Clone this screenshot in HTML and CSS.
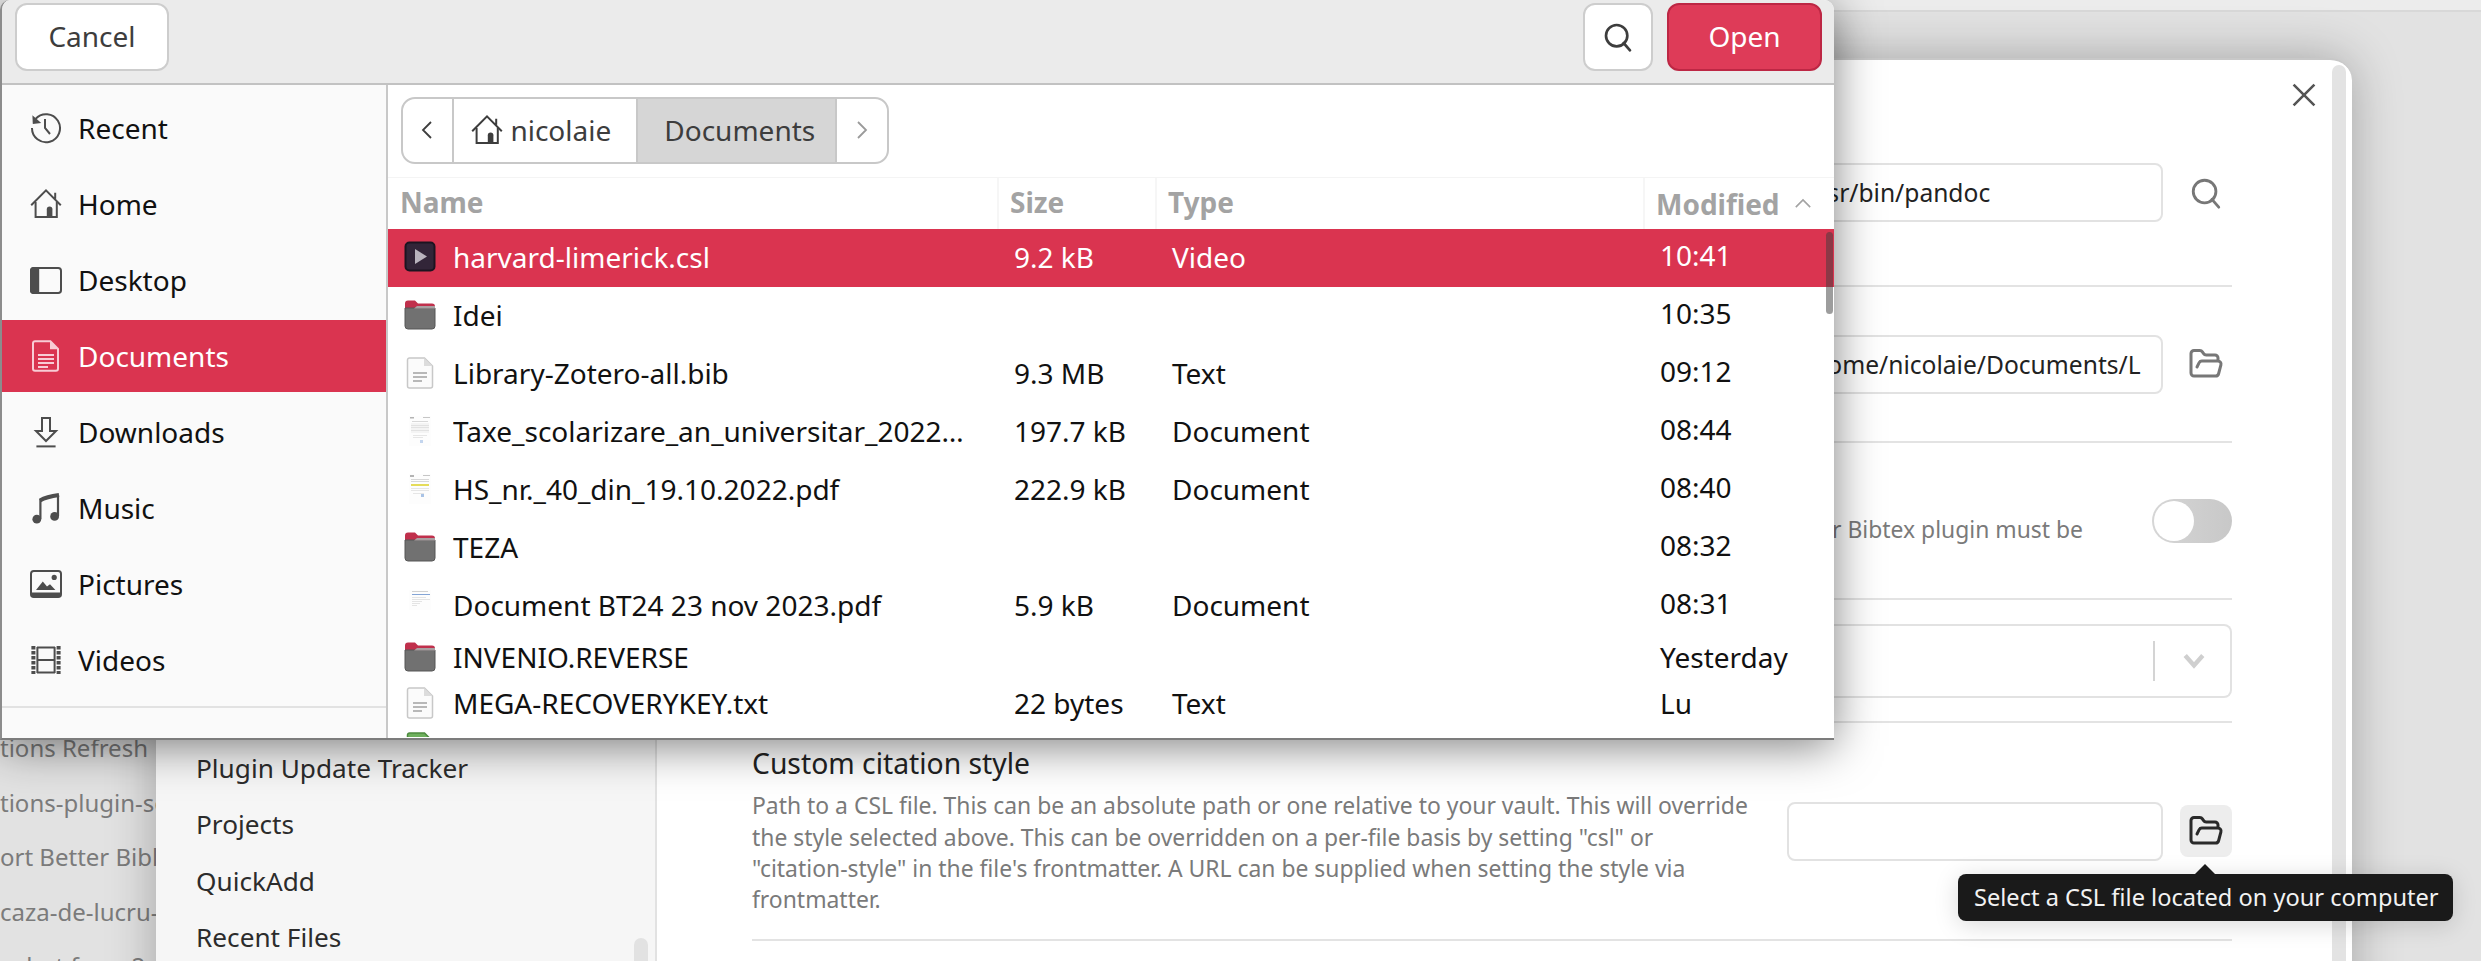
FILE: index.html
```html
<!DOCTYPE html>
<html lang="en">
  <head>
    <meta charset="UTF-8" />
    <title>Open CSL file</title>
    <link rel="stylesheet" href="styles.css">
  </head>
  <body>
    <svg class="sprite" xmlns="http://www.w3.org/2000/svg">
      <symbol id="i-recent" viewBox="0 0 16 16">
        <path d="M2.8 3.4A7 7 0 1 1 1 8" fill="none" stroke="currentColor" />
        <path d="M1.2 1.6 1.4 6l4.2-.5z" fill="currentColor" />
        <path d="M7.5 3.5V8l2.5 3" fill="none" stroke="currentColor" />
      </symbol>
      <symbol id="i-home" viewBox="0 0 16 16">
        <path d="M.6 8.6 8 1.2l7.4 7.4M12.6 2.4v3" fill="none" stroke="currentColor" />
        <path d="M2.8 7v7.5h10.6V7" fill="none" stroke="currentColor" />
        <path d="M8.4 10.6a1.3 1.3 0 0 1 2.8 0V15H8.4z" fill="currentColor" />
      </symbol>
      <symbol id="i-desktop" viewBox="0 0 16 16">
        <rect x=".5" y="2" width="15" height="12.5" rx="1.4" fill="none" stroke="currentColor" />
        <path d="M2 1.5h2.6v13.5H2a2 2 0 0 1-2-2V3.500a2 2 0 0 1 2-2z" fill="currentColor" />
      </symbol>
      <symbol id="i-doc" viewBox="0 0 16 16">
        <path d="M2.500.6h7.700l3.800 3.800v10a1 1 0 0 1-1 1H2.500a1 1 0 0 1-1-1V1.600a1 1 0 0 1 1-1z" fill="none" stroke="currentColor" />
        <path d="M10 .6v4h4z" fill="currentColor" />
        <path d="M4 7.500h8M4 9.500h8M4 11.500h8M4 13.500h5" fill="none" stroke="currentColor" stroke-width=".9" />
      </symbol>
      <symbol id="i-down" viewBox="0 0 16 16">
        <path d="M6 1h4v6.500h3L8 12.500 3 7.500h3z" fill="none" stroke="currentColor" />
        <path d="M3.200 15.200h9.600" fill="none" stroke="currentColor" />
      </symbol>
      <symbol id="i-music" viewBox="0 0 16 16">
        <path d="M5.200 13.500V3.500M14 12V1.500" fill="none" stroke="currentColor" stroke-width="1.100" />
        <path d="M5 4.200C8 2.500 11 2 14.500 1.500" fill="none" stroke="currentColor" stroke-width="2" />
        <circle cx="3.400" cy="13.600" r="2.200" fill="currentColor" />
        <circle cx="12.300" cy="12.200" r="2.200" fill="currentColor" />
      </symbol>
      <symbol id="i-pics" viewBox="0 0 16 16">
        <rect x=".5" y="1.500" width="15" height="13" rx="1.400" fill="none" stroke="currentColor" />
        <path d="M.5 12.300h15V13a1.500 1.500 0 0 1-1.500 1.500H2A1.500 1.500 0 0 1 .5 13z" fill="currentColor" />
        <path d="M3 11 6.400 6.800l2.100 2.400 1.500-1.100 2.700 2.900z" fill="currentColor" />
        <circle cx="12.100" cy="4.700" r="1.300" fill="currentColor" />
      </symbol>
      <symbol id="i-film" viewBox="0 0 16 16">
        <path d="M3.500 1.700h9M3.500 8h9M3.500 14.300h9M3.700 1.500v13M12.300 1.500v13" fill="none" stroke="currentColor" />
        <path d="M1.700 1v14M14.300 1v14" fill="none" stroke="currentColor" stroke-width="2" stroke-dasharray="1.800 .7" />
      </symbol>
      <symbol id="i-video" viewBox="0 0 32 32">
        <rect x="1.500" y="1.500" width="29" height="28" rx="4" fill="#322538" stroke="#1c1420" stroke-width="2" />
        <path d="M11 8 23 15.500 11 23z" fill="#b9b3bd" />
      </symbol>
      <symbol id="i-folder" viewBox="0 0 32 32">
        <path d="M1 8V4.500A3 3 0 0 1 4 1.500h7l3 3h14a3 3 0 0 1 3 3V13H1z" fill="#c0304c" />
        <path d="M1 9h30v18a3 3 0 0 1-3 3H4a3 3 0 0 1-3-3z" fill="#717171" stroke="#575757" />
        <path d="M10 9.500l3-2.500h18v2.500z" fill="#a9a0a2" />
      </symbol>
      <symbol id="i-text" viewBox="0 0 32 32">
        <path d="M5.500 1h15l8 8v20a2 2 0 0 1-2 2h-21a2 2 0 0 1-2-2V3a2 2 0 0 1 2-2z" fill="#fbfbfb" stroke="#c8c8c8" stroke-width="1.500" />
        <path d="M20 1v8h8.500z" fill="#dcdcdc" />
        <path d="M9 15h14v2H9zM9 19h14v2H9zM9 23h9v2H9z" fill="#b8b8b8" />
      </symbol>
      <symbol id="i-thumb-a" viewBox="0 0 32 32">
        <rect x="5" y="1" width="22" height="30" fill="#fdfdfd" />
        <path d="M6 2h4v1.500H6zM19 2h7v.8H19zM8 6h16v.6H8z" fill="#b4b4b4" />
        <path d="M7 8h18v10H7z" fill="#f4f4f4" />
        <path d="M7 10h18v.5H7zM7 12.500h18v.5H7zM7 15h18v.5H7zM9 20h14v.5H9zM9 22h10v.5H9z" fill="#d0d0d0" />
        <path d="M16 25h3v3h-3z" fill="#c3d5ee" />
      </symbol>
      <symbol id="i-thumb-b" viewBox="0 0 32 32">
        <rect x="5" y="1" width="22" height="30" fill="#fdfdfd" />
        <path d="M6 2h4v2H6zM19 2h7v.8H19zM7 6h18v.6H7zM7 8h18v.6H7z" fill="#b4b4b4" />
        <path d="M7 11h18v2H7z" fill="#e5dc5a" />
        <path d="M7 15h18v.5H7zM7 17h18v.5H7zM9 20h11v.5H9z" fill="#d0d0d0" />
        <path d="M17 21h3v3h-3z" fill="#a9c3e6" />
      </symbol>
      <symbol id="i-thumb-c" viewBox="0 0 32 32">
        <rect x="5" y="1" width="22" height="20" fill="#fdfdfd" />
        <path d="M8 2h16v.6H8z" fill="#b4b4b4" />
        <path d="M8 5h18v1H8z" fill="#84a5d6" />
        <path d="M8 8h14v.5H8zM8 10h18v.5H8zM8 12h10v.5H8zM8 14h8v.5H8zM8 16h5v.5H8z" fill="#cccccc" />
      </symbol>
      <symbol id="i-sheet" viewBox="0 0 32 32">
        <path d="M5.500 1h15l8 8v20a2 2 0 0 1-2 2h-21a2 2 0 0 1-2-2V3a2 2 0 0 1 2-2z" fill="#6fb05e" stroke="#4d8a3f" stroke-width="1.500" />
      </symbol>
      <symbol id="i-search" viewBox="0 0 24 24">
        <circle cx="11" cy="11" r="8" fill="none" stroke="currentColor" stroke-width="2" />
        <path d="m21 22-4.800-5.500" fill="none" stroke="currentColor" stroke-width="2" stroke-linecap="round" />
      </symbol>
      <symbol id="i-open" viewBox="0 0 24 24">
        <path d="m6 14 1.450-2.900A2 2 0 0 1 9.240 10H20a2 2 0 0 1 1.940 2.500l-1.550 6a2 2 0 0 1-1.940 1.500H4a2 2 0 0 1-2-2V5c0-1.100.9-2 2-2h3.930a2 2 0 0 1 1.660.9l.82 1.200a2 2 0 0 0 1.660.9H18a2 2 0 0 1 2 2v2" fill="none" stroke="currentColor" stroke-width="2" stroke-linecap="round" stroke-linejoin="round" />
      </symbol>
    </svg>

    <div class="desktop">
      <div class="app-top"></div>

      <div class="back-files">
        <div>tions Refresh</div>
        <div>tions-plugin-se</div>
        <div>ort Better Bibl</div>
        <div>caza-de-lucru-</div>
        <div>pshot from 2</div>
      </div>

      <div class="modal">
        <div class="modal-side">
          <div>Plugin Update Tracker</div>
          <div>Projects</div>
          <div>QuickAdd</div>
          <div>Recent Files</div>
          <div class="side-thumb"></div>
        </div>
        <div class="modal-main">
          <svg class="modal-close" viewBox="0 0 20 20"><path d="M2 2l16 16M18 2 2 18" /></svg>
          <div class="setting setting-first">
            <div class="info"></div>
            <div class="controls">
              <div class="field">/usr/bin/pandoc</div>
              <div class="icon-btn"><svg class="btn-search"><use href="#i-search" /></svg></div>
            </div>
          </div>
          <div class="setting setting-path">
            <div class="info"></div>
            <div class="controls">
              <div class="field">/home/nicolaie/Documents/L</div>
              <div class="icon-btn"><svg class="btn-open"><use href="#i-open" /></svg></div>
            </div>
          </div>
          <div class="setting setting-toggle">
            <div class="info toggle-info">Better Bibtex plugin must be</div>
            <div class="toggle"><div class="knob"></div></div>
          </div>
          <div class="setting setting-select">
            <div class="info"></div>
            <div class="select">
              <div class="select-sep"></div>
              <svg class="select-arrow" viewBox="0 0 20 14"><path d="M2 2l8 9 8-9" /></svg>
            </div>
          </div>
          <div class="setting setting-custom">
            <div class="info">
              <div class="info-title">Custom citation style</div>
              <div class="info-desc">
                Path to a CSL file. This can be an absolute path or one relative to your vault. This will override<br />
                the style selected above. This can be overridden on a per-file basis by setting "csl" or<br />
                "citation-style" in the file's frontmatter. A URL can be supplied when setting the style via<br />
                frontmatter.
              </div>
            </div>
            <div class="controls">
              <div class="field"></div>
              <div class="icon-btn icon-btn-active"><svg class="btn-open"><use href="#i-open" /></svg></div>
            </div>
          </div>
        </div>
        <div class="modal-scroll"><div></div></div>
      </div>

      <div class="tooltip">Select a CSL file located on your computer</div>

      <div class="dialog">
        <div class="dialog-head">
          <button class="btn btn-cancel">Cancel</button>
          <div class="head-right">
            <button class="btn btn-search-head"><svg><use href="#i-search" /></svg></button>
            <button class="btn btn-open-file">Open</button>
          </div>
        </div>
        <div class="dialog-body">
          <div class="places">
            <div class="place-list">
              <div class="place"><svg><use href="#i-recent" /></svg>Recent</div>
              <div class="place"><svg><use href="#i-home" /></svg>Home</div>
              <div class="place"><svg><use href="#i-desktop" /></svg>Desktop</div>
              <div class="place place-on"><svg><use href="#i-doc" /></svg>Documents</div>
              <div class="place"><svg><use href="#i-down" /></svg>Downloads</div>
              <div class="place"><svg><use href="#i-music" /></svg>Music</div>
              <div class="place"><svg><use href="#i-pics" /></svg>Pictures</div>
              <div class="place"><svg><use href="#i-film" /></svg>Videos</div>
            </div>
          </div>
          <div class="browser">
            <div class="path-wrap">
              <div class="pathbar">
                <div class="crumb crumb-nav">
                  <svg viewBox="0 0 12 20"><path d="M10 2 2 10l8 8" /></svg>
                </div>
                <div class="crumb crumb-home"><svg><use href="#i-home" /></svg>nicolaie</div>
                <div class="crumb crumb-on">Documents</div>
                <div class="crumb crumb-nav crumb-next">
                  <svg viewBox="0 0 12 20"><path d="M2 2l8 8-8 8" /></svg>
                </div>
              </div>
            </div>
            <div class="file-grid file-head">
              <div>Name</div>
              <div>Size</div>
              <div>Type</div>
              <div class="sort-col">Modified<svg viewBox="0 0 20 12"><path d="M2 10l8-8 8 8" /></svg></div>
            </div>
            <div class="files">
              <div class="file-grid file file-on">
                <div class="file-name"><svg><use href="#i-video" /></svg><span>harvard-limerick.csl</span></div>
                <div>9.2 kB</div><div>Video</div><div>10:41</div>
              </div>
              <div class="file-grid file">
                <div class="file-name"><svg><use href="#i-folder" /></svg><span>Idei</span></div>
                <div></div><div></div><div>10:35</div>
              </div>
              <div class="file-grid file">
                <div class="file-name"><svg><use href="#i-text" /></svg><span>Library-Zotero-all.bib</span></div>
                <div>9.3 MB</div><div>Text</div><div>09:12</div>
              </div>
              <div class="file-grid file">
                <div class="file-name"><svg><use href="#i-thumb-a" /></svg><span>Taxe_scolarizare_an_universitar_2022…</span></div>
                <div>197.7 kB</div><div>Document</div><div>08:44</div>
              </div>
              <div class="file-grid file">
                <div class="file-name"><svg><use href="#i-thumb-b" /></svg><span>HS_nr._40_din_19.10.2022.pdf</span></div>
                <div>222.9 kB</div><div>Document</div><div>08:40</div>
              </div>
              <div class="file-grid file">
                <div class="file-name"><svg><use href="#i-folder" /></svg><span>TEZA</span></div>
                <div></div><div></div><div>08:32</div>
              </div>
              <div class="file-grid file">
                <div class="file-name"><svg><use href="#i-thumb-c" /></svg><span>Document BT24 23 nov 2023.pdf</span></div>
                <div>5.9 kB</div><div>Document</div><div>08:31</div>
              </div>
              <div class="file-grid file file-short">
                <div class="file-name"><svg><use href="#i-folder" /></svg><span>INVENIO.REVERSE</span></div>
                <div></div><div></div><div>Yesterday</div>
              </div>
              <div class="file-grid file file-short">
                <div class="file-name"><svg><use href="#i-text" /></svg><span>MEGA-RECOVERYKEY.txt</span></div>
                <div>22 bytes</div><div>Text</div><div>Lu</div>
              </div>
              <div class="file-grid file file-cut">
                <div class="file-name"><svg><use href="#i-sheet" /></svg><span>tabel-final.ods</span></div>
                <div>8.1 kB</div><div>Spreadsheet</div><div>Lu</div>
              </div>
            </div>
            <div class="files-scroll"><div></div></div>
          </div>
        </div>
      </div>
    </div>
  </body>
</html>
```

FILE: styles.css
```css
* {
  box-sizing: border-box;
}

body {
  margin: 0;
  font-family: "Noto Sans", sans-serif;
  font-size: 28px;
  color: #111;
  background: #e2e2e2;
  overflow: hidden;
}

.sprite {
  display: none;
}

.desktop {
  position: relative;
  width: 2481px;
  height: 961px;
  overflow: hidden;
}

.app-top {
  height: 12px;
  background: #ececec;
  border-bottom: 2px solid #d8d8d8;
}

/* file tree of the app behind the settings window */
.back-files {
  position: absolute;
  left: 0;
  top: 721px;
  width: 156px;
  overflow: hidden;
  white-space: nowrap;
  font-size: 24px;
  line-height: 54.500px;
  color: #7b7b7b;
}

/* settings window */
.modal {
  position: absolute;
  left: 156px;
  top: 58px;
  width: 2196px;
  height: 960px;
  display: flex;
  background: #fff;
  border-top: 2px solid #c8c8c8;
  border-radius: 22px 22px 0 0;
  box-shadow: 0 0 50px rgba(0, 0, 0, 0.28);
  overflow: hidden;
}

.modal-side {
  position: relative;
  width: 501px;
  padding: 680px 0 0 40px;
  background: #f6f6f6;
  border-right: 2px solid #e2e2e2;
  font-size: 26.200px;
  line-height: 56.300px;
  color: #2c2c2c;
}

.side-thumb {
  position: absolute;
  left: 478px;
  top: 878px;
  width: 14px;
  height: 60px;
  border-radius: 7px;
  background: #e2e2e2;
}

.modal-main {
  position: relative;
  width: 1675px;
  padding: 40px 100px 0 95px;
}

.modal-close {
  position: absolute;
  left: 1634px;
  top: 22px;
  width: 26px;
  height: 26px;
}

.modal-close path {
  fill: none;
  stroke: #555;
  stroke-width: 2;
}

.modal-scroll {
  width: 20px;
  padding: 5px 6px 0 0;
}

.modal-scroll div {
  height: 100%;
  background: #e3e3e3;
  border-radius: 7px 7px 0 0;
}

.setting {
  display: flex;
  align-items: center;
  justify-content: space-between;
  border-bottom: 2px solid #e3e3e3;
}

.setting-first {
  height: 187px;
}

.setting-path {
  height: 156px;
}

.setting-toggle {
  height: 157px;
}

.setting-select {
  height: 123px;
}

.setting-custom {
  height: 218px;
}

.info {
  flex: 1;
}

.info-title {
  font-size: 28.300px;
  line-height: 34px;
  color: #222;
  margin-bottom: 10px;
}

.info-desc {
  font-size: 22.900px;
  line-height: 31.300px;
  color: #7a7a7a;
  white-space: nowrap;
}

.toggle-info {
  margin-top: 18px;
  padding-right: 69px;
  text-align: right;
  font-size: 22.900px;
  color: #7a7a7a;
}

.controls {
  display: flex;
  align-items: center;
}

.field {
  width: 376px;
  height: 59px;
  padding: 0 14px;
  overflow: hidden;
  white-space: nowrap;
  font-size: 24.600px;
  line-height: 55px;
  color: #222;
  background: #fff;
  border: 2px solid #e2e2e2;
  border-radius: 8px;
}

.icon-btn {
  display: flex;
  align-items: center;
  justify-content: center;
  width: 52px;
  height: 52px;
  margin-left: 17px;
  border-radius: 8px;
  color: #777;
}

.icon-btn-active {
  background: #ededed;
  color: #2a2a2a;
}

.btn-search {
  width: 34px;
  height: 34px;
}

.btn-open {
  width: 36px;
  height: 36px;
}

.toggle {
  display: flex;
  align-items: center;
  width: 80px;
  height: 44px;
  padding-left: 2px;
  border-radius: 22px;
  background: linear-gradient(90deg, #d6d6d6, #c8c8c8);
}

.knob {
  width: 40px;
  height: 40px;
  border-radius: 50%;
  background: #fff;
}

.select {
  display: flex;
  align-items: center;
  justify-content: flex-end;
  width: 760px;
  height: 74px;
  border: 2px solid #e2e2e2;
  border-left: 0;
  border-radius: 0 8px 8px 0;
}

.select-sep {
  width: 2px;
  height: 40px;
  background: #d4d4d4;
}

.select-arrow {
  width: 22px;
  height: 16px;
  margin: 0 25px 0 28px;
}

.select-arrow path {
  fill: none;
  stroke: #cfcfcf;
  stroke-width: 4;
}

.tooltip {
  position: absolute;
  left: 1958px;
  top: 874px;
  width: 495px;
  height: 47px;
  padding-left: 16px;
  background: #1a1a1a;
  border-radius: 8px;
  color: #f2f2f2;
  font-size: 23.600px;
  line-height: 46px;
  white-space: nowrap;
  box-shadow: 0 4px 24px rgba(0, 0, 0, 0.15);
}

.tooltip::before {
  content: "";
  position: absolute;
  left: 237px;
  top: -10px;
  border-left: 10px solid transparent;
  border-right: 10px solid transparent;
  border-bottom: 10px solid #1a1a1a;
}

/* file chooser */
.dialog {
  position: absolute;
  left: 0;
  top: 0;
  width: 1834px;
  height: 740px;
  display: flex;
  flex-direction: column;
  background: #fff;
  border-left: 2px solid #8c8c8c;
  border-bottom: 2px solid #7c7c7c;
  border-radius: 10px 10px 0 0;
  box-shadow: 0 6px 46px rgba(0, 0, 0, 0.5);
  overflow: hidden;
}

.dialog-head {
  display: flex;
  align-items: flex-start;
  justify-content: space-between;
  height: 85px;
  padding: 3px 12px 0 13px;
  background: #ebebeb;
  border-bottom: 2px solid #c2c2c2;
}

.head-right {
  display: flex;
  gap: 14px;
}

.btn {
  height: 68px;
  border: 2px solid #cdcdcd;
  border-radius: 12px;
  background: #fff;
  color: #3d3d3d;
  font-family: inherit;
  font-size: 28px;
  padding: 0 0 3px;
}

.btn-cancel {
  width: 154px;
}

.btn-search-head {
  display: flex;
  align-items: center;
  justify-content: center;
  width: 70px;
  padding: 0;
}

.btn-search-head svg {
  width: 32px;
  height: 32px;
}

.btn-open-file {
  width: 155px;
  background: #de3b58;
  border-color: #bd2744;
  color: #fff;
}

.dialog-body {
  flex: 1;
  display: flex;
  min-height: 0;
}

.places {
  width: 386px;
  height: 100%;
  padding-top: 7px;
  background: #fafafa;
  border-right: 2px solid #c8c8c8;
}

.place-list {
  height: 616px;
  border-bottom: 2px solid #e2e2e2;
}

.place {
  display: flex;
  align-items: center;
  height: 72px;
  margin-bottom: 4px;
  padding-left: 28px;
}

.place svg {
  width: 32px;
  height: 32px;
  margin-right: 16px;
  color: #4d4d4d;
}

.place-on {
  background: #da3450;
  color: #fff;
}

.place-on svg {
  color: #f8ccd5;
}

.browser {
  position: relative;
  flex: 1;
  min-width: 0;
}

.path-wrap {
  height: 93px;
  padding: 12px 0 0 13px;
  border-bottom: 1px solid #f4f4f4;
}

.pathbar {
  display: flex;
  width: 488px;
  height: 67px;
  border: 2px solid #c8c8c8;
  border-radius: 14px;
  overflow: hidden;
  color: #3d3d3d;
}

.crumb {
  display: flex;
  align-items: center;
  justify-content: center;
  padding-bottom: 2px;
  border-right: 2px solid #c8c8c8;
}

.crumb-nav {
  width: 51px;
}

.crumb-nav svg {
  width: 12px;
  height: 20px;
}

.crumb-nav path {
  fill: none;
  stroke: #3d3d3d;
  stroke-width: 1.800;
}

.crumb-next {
  width: 50px;
  border-right: 0;
}

.crumb-next path {
  stroke: #9a9a9a;
}

.crumb-home {
  width: 186px;
  padding-right: 7px;
}

.crumb-home svg {
  width: 32px;
  height: 32px;
  margin-right: 7px;
  color: #3d3d3d;
}

.crumb-on {
  width: 201px;
  padding-left: 6px;
  background: #d6d6d6;
}

.file-grid {
  display: grid;
  grid-template-columns: 609px 158px 488px 1fr;
  align-items: center;
}

.file-head {
  height: 51px;
  font-size: 28px;
  font-weight: 700;
  color: #a3a3a3;
}

.file-head > div {
  height: 100%;
  padding-left: 11px;
  line-height: 48px;
  border-left: 2px solid #f6f6f6;
}

.file-head > div:first-child {
  padding-left: 12px;
  border-left: 0;
}

.sort-col {
  display: flex;
  align-items: center;
  gap: 14px;
}

.sort-col svg {
  width: 18px;
  height: 11px;
}

.sort-col path {
  fill: none;
  stroke: #a3a3a3;
  stroke-width: 1.800;
}

.files {
  height: 508px;
  overflow: hidden;
}

.file {
  height: 58px;
}

.file > div {
  padding: 0 0 3px 17px;
  white-space: nowrap;
}

.file > div:last-child {
  padding-bottom: 6px;
}

.file-short > div:last-child {
  padding-bottom: 3px;
}

.file > .file-name {
  display: flex;
  align-items: center;
  padding-left: 16px;
}

.file-name svg {
  flex: none;
  width: 32px;
  height: 32px;
  margin-right: 17px;
}

.file-name span {
  width: 530px;
  overflow: hidden;
}

.file-on {
  background: #da3450;
  color: #fff;
}

.file-short {
  height: 46px;
}

.file-cut {
  height: 36px;
}

.files-scroll {
  position: absolute;
  right: 1px;
  top: 147px;
  width: 7px;
  height: 82px;
}

.files-scroll div {
  height: 100%;
  border-radius: 4px;
  background: rgba(60, 60, 60, 0.5);
}
```
